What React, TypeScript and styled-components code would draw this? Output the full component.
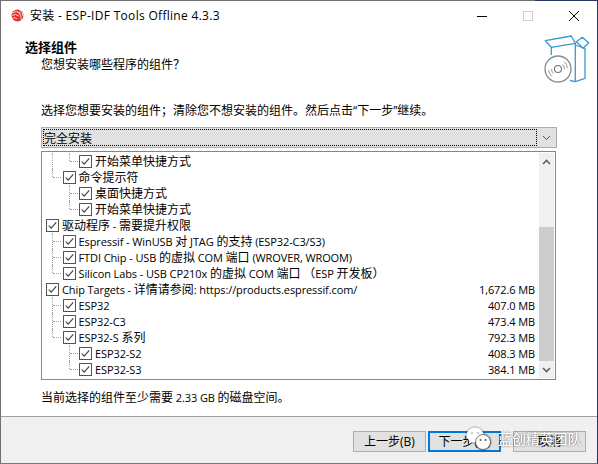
import React, { FC } from 'react'
import styled, { createGlobalStyle } from 'styled-components'

const FONT = `"Open Sans", "Noto Sans CJK SC", sans-serif`

type GuideKind = 'none' | 'pipe' | 'tee' | 'end'

const components: { id: number; guides: GuideKind[]; label: string; size?: string }[] = [
  { id: 1, guides: ['pipe', 'end'], label: '开始菜单快捷方式' },
  { id: 2, guides: ['end'], label: '命令提示符' },
  { id: 3, guides: ['none', 'tee'], label: '桌面快捷方式' },
  { id: 4, guides: ['none', 'end'], label: '开始菜单快捷方式' },
  { id: 5, guides: [], label: '驱动程序 - 需要提升权限' },
  { id: 6, guides: ['tee'], label: 'Espressif - WinUSB 对 JTAG 的支持 (ESP32-C3/S3)' },
  { id: 7, guides: ['tee'], label: 'FTDI Chip - USB 的虚拟 COM 端口 (WROVER, WROOM)' },
  { id: 8, guides: ['end'], label: 'Silicon Labs - USB CP210x 的虚拟 COM 端口 （ESP 开发板）' },
  { id: 9, guides: [], label: 'Chip Targets - 详情请参阅: https://products.espressif.com/', size: '1,672.6 MB' },
  { id: 10, guides: ['tee'], label: 'ESP32', size: '407.0 MB' },
  { id: 11, guides: ['tee'], label: 'ESP32-C3', size: '473.4 MB' },
  { id: 12, guides: ['end'], label: 'ESP32-S 系列', size: '792.3 MB' },
  { id: 13, guides: ['none', 'tee'], label: 'ESP32-S2', size: '408.3 MB' },
  { id: 14, guides: ['none', 'end'], label: 'ESP32-S3', size: '384.1 MB' }
]

const GlobalStyle = createGlobalStyle`
  html, body {
    margin: 0;
    padding: 0;
    background: #fff;
  }
`

const WINDOW = styled.div`
  position: relative;
  box-sizing: border-box;
  width: 598px;
  height: 464px;
  display: flex;
  flex-direction: column;
  background: #fff;
  border-top: 1px solid #707070;
  border-left: 1px solid #707070;
  border-right: 1px solid #24375c;
  border-bottom: 1px solid #7a7a7a;
  font-family: ${FONT};
  font-size: 12px;
  line-height: 16px;
  color: #000;

  &::before {
    content: '';
    position: absolute;
    top: -1px;
    right: -1px;
    width: 63px;
    height: 1px;
    background: #24375c;
  }
`

const TITLE_BAR = styled.div`
  height: 29px;
  flex: none;
  display: flex;
  align-items: center;
  padding-left: 10px;
`

const TITLE_TEXT = styled.span`
  margin-left: 6px;
  flex: 1;
  letter-spacing: 0.3px;
`

const WINDOW_BUTTON = styled.div`
  width: 46px;
  height: 29px;
  display: flex;
  align-items: center;
  justify-content: center;
`

const HEADER = styled.div`
  height: 61px;
  flex: none;
  display: flex;
  align-items: flex-start;
  justify-content: space-between;
`

const HEADER_TEXT = styled.div`
  padding: 9px 0 0 24px;
`

const HEADER_TITLE = styled.div`
  font-size: 13px;
  font-weight: 700;
`

const HEADER_SUB = styled.div`
  margin-top: 2px;
  padding-left: 16px;
`

const BODY = styled.div`
  flex: 1;
  display: flex;
  flex-direction: column;
  padding: 12px 40px 0;
`

const INTRO = styled.div`
  margin-bottom: 8px;
  white-space: nowrap;
`

const COMBO = styled.div`
  box-sizing: border-box;
  height: 21px;
  flex: none;
  display: flex;
  align-items: center;
  padding: 1px;
  background: #e1e1e1;
  border: 1px solid #adadad;
`

const COMBO_VALUE = styled.div`
  flex: 1;
  height: 17px;
  box-sizing: border-box;
  border: 1px dotted #000;
  line-height: 17px;
`

const COMBO_ARROW = styled.div`
  width: 18px;
  display: flex;
  justify-content: center;
`

const LIST = styled.div`
  box-sizing: border-box;
  width: 515px;
  height: 229px;
  margin-top: 3px;
  flex: none;
  display: flex;
  padding: 1px;
  border: 1px solid #828790;
`

const ROWS = styled.div`
  flex: 1;
  padding: 0 4px 0 3px;
`

const ROW = styled.div`
  height: 16px;
  display: flex;
  align-items: center;
  white-space: nowrap;
`

const GUIDE = styled.div<{ $kind: GuideKind }>`
  position: relative;
  width: 16.5px;
  height: 16px;
  flex: none;

  &::before {
    content: '';
    display: ${(props) => (props.$kind === 'none' ? 'none' : 'block')};
    position: absolute;
    left: 6px;
    top: 0;
    height: ${(props) => (props.$kind === 'end' ? '8px' : '16px')};
    border-left: 1px dotted #a0a0a0;
  }

  &::after {
    content: '';
    display: ${(props) => (props.$kind === 'tee' || props.$kind === 'end' ? 'block' : 'none')};
    position: absolute;
    left: 7px;
    top: 8px;
    width: 8px;
    border-top: 1px dotted #a0a0a0;
  }
`

const CHECK = styled.svg`
  width: 13px;
  height: 13px;
  flex: none;
  margin-right: 3px;
`

const LABEL = styled.span`
  flex: 1;
  margin-top: 2px;
`

const SIZE = styled.span`
  flex: none;
  margin-top: 2px;
`

const LATIN = styled.span`
  font-size: 11px;
  letter-spacing: -0.1px;
`

const SCROLLBAR = styled.div`
  width: 15px;
  flex: none;
  display: flex;
  flex-direction: column;
  background: #f0f0f0;
`

const SCROLL_BUTTON = styled.div`
  height: 17px;
  flex: none;
  display: flex;
  align-items: center;
  justify-content: center;
`

const SCROLL_THUMB = styled.div`
  height: 134px;
  margin-top: 57px;
  flex: none;
  background: #cdcdcd;
`

const SCROLL_TRACK = styled.div`
  flex: 1;
`

const NOTE = styled.div`
  margin-top: 10px;
`

const FOOTER = styled.div`
  height: 47px;
  flex: none;
  box-sizing: border-box;
  display: flex;
  justify-content: flex-end;
  gap: 2px;
  padding: 14px 11px 0 0;
  background: #f0f0f0;
  border-top: 1px solid #a0a0a0;
`

const BUTTON = styled.div<{ $primary?: boolean; $spaced?: boolean }>`
  box-sizing: border-box;
  width: 73px;
  height: 21px;
  display: flex;
  align-items: center;
  justify-content: center;
  background: #e1e1e1;
  border: ${(props) => (props.$primary ? '2px solid #0078d7' : '1px solid #adadad')};
  margin-right: ${(props) => (props.$spaced ? '10px' : '0')};
`

const WATERMARK = styled.div`
  position: absolute;
  left: 465px;
  top: 425px;
  display: flex;
  align-items: center;
  filter: drop-shadow(0 0 1px rgba(0, 0, 0, 0.55));
`

const WATERMARK_TEXT = styled.span`
  margin: 0 0 1px 6px;
  font-size: 14px;
  color: #fff;
  letter-spacing: -0.1px;
`

const Mixed: FC<{ text: string }> = ({ text }) => (
  <>
    {text.split(/([\u0020-\u00ff]+)/).map((part, index) => (index % 2 === 1 ? <LATIN key={index}>{part}</LATIN> : part))}
  </>
)

const Logo: FC = () => (
  <svg width="13" height="13" viewBox="0 0 13 13" fill="none">
    <circle cx="6.5" cy="6.5" r="6" fill="#e5322d" />
    <g stroke="#fff" strokeWidth="0.8">
      <path d="M1.5 3.6A7 7 0 0 1 9.6 4.4" />
      <path d="M1 6.4A6 6 0 0 1 7.8 7" />
      <path d="M1.4 9.2A4 4 0 0 1 6 9.8" />
      <path d="M8.6 1A8 8 0 0 1 12 7.2" />
      <path d="M6.6 3A8 8 0 0 1 10 10.8" />
    </g>
  </svg>
)

const BoxIcon: FC = () => (
  <svg width="57" height="60" viewBox="0 0 57 60" fill="none">
    <g stroke="#3a97d4" strokeWidth="1.3" strokeLinejoin="round">
      <path d="M5.3 10.7 31.3 6 35.3 13.3 11.3 17.3Z" />
      <path d="M11.3 17.3V25" />
      <path d="M35.3 13.3V51.7" />
      <path d="M35.3 15 45 18.3V48.3L35.3 51.7 30 50.5" />
      <path d="M36.3 11.7 42.3 7.3 48.7 12.7 43 18.3Z" />
    </g>
    <circle cx="18" cy="39" r="13" fill="#fff" stroke="#8a8a8a" strokeWidth="1.3" />
    <circle cx="18" cy="39" r="3.5" stroke="#777" strokeWidth="1.1" />
    <g stroke="#8c8c8c" strokeWidth="0.9">
      <path d="M22.5 34.5A6.5 6.5 0 0 1 24.5 39" />
      <path d="M24 31.5A10 10 0 0 1 27.5 38" />
      <path d="M13.5 43.5A6.5 6.5 0 0 1 11.5 39" />
      <path d="M12 46.5A10 10 0 0 1 8.5 40" />
    </g>
  </svg>
)

const CheckBox: FC = () => (
  <CHECK viewBox="0 0 13 13" fill="none">
    <rect x="0.5" y="0.5" width="12" height="12" fill="#fff" stroke="#555" />
    <path d="M2.8 6.6 5.2 9.2 10.2 3.4" stroke="#444" strokeWidth="1.2" />
  </CHECK>
)

const Chevron: FC<{ up?: boolean; stroke?: string; width?: number }> = ({ up, stroke = '#606060', width = 1.6 }) => (
  <svg width="9" height="6" viewBox="0 0 9 6" fill="none">
    <path d={up ? 'M1 5 4.5 1.5 8 5' : 'M1 1 4.5 4.5 8 1'} stroke={stroke} strokeWidth={width} />
  </svg>
)

const WeChatIcon: FC = () => (
  <svg width="26" height="26" viewBox="0 0 26 26">
    <ellipse cx="9" cy="9" rx="8.5" ry="7.5" fill="#fff" />
    <path d="M4 13 3 18 8 15Z" fill="#fff" />
    <circle cx="6" cy="7" r="1" fill="#bbb" />
    <circle cx="12" cy="7" r="1" fill="#bbb" />
    <circle cx="17" cy="16" r="7.5" fill="#fff" stroke="#555" strokeWidth="0.8" />
    <circle cx="14.5" cy="14" r="1" fill="#555" />
    <circle cx="19.5" cy="14" r="1" fill="#555" />
  </svg>
)

const App: FC = () => {
  return (
    <>
      <GlobalStyle />
      <WINDOW>
        <TITLE_BAR>
          <Logo />
          <TITLE_TEXT>安装 - ESP-IDF Tools Offline 4.3.3</TITLE_TEXT>
          <WINDOW_BUTTON>
            <svg width="10" height="10" viewBox="0 0 10 10">
              <path d="M0 5.5H10" stroke="#000" />
            </svg>
          </WINDOW_BUTTON>
          <WINDOW_BUTTON>
            <svg width="10" height="10" viewBox="0 0 10 10">
              <rect x="0.5" y="0.5" width="9" height="9" fill="none" stroke="#ccc" />
            </svg>
          </WINDOW_BUTTON>
          <WINDOW_BUTTON>
            <svg width="10" height="10" viewBox="0 0 10 10">
              <path d="M0 0 10 10M10 0 0 10" stroke="#000" />
            </svg>
          </WINDOW_BUTTON>
        </TITLE_BAR>
        <HEADER>
          <HEADER_TEXT>
            <HEADER_TITLE>选择组件</HEADER_TITLE>
            <HEADER_SUB>您想安装哪些程序的组件？</HEADER_SUB>
          </HEADER_TEXT>
          <BoxIcon />
        </HEADER>
        <BODY>
          <INTRO>选择您想要安装的组件；清除您不想安装的组件。然后点击“下一步”继续。</INTRO>
          <COMBO>
            <COMBO_VALUE>完全安装</COMBO_VALUE>
            <COMBO_ARROW>
              <Chevron stroke="#555" width={1} />
            </COMBO_ARROW>
          </COMBO>
          <LIST>
            <ROWS>
              {components.map((item) => {
                return (
                  <ROW key={item.id}>
                    {item.guides.map((kind, index) => (
                      <GUIDE key={index} $kind={kind} />
                    ))}
                    <CheckBox />
                    <LABEL>
                      <Mixed text={item.label} />
                    </LABEL>
                    {item.size && (
                      <SIZE>
                        <Mixed text={item.size} />
                      </SIZE>
                    )}
                  </ROW>
                )
              })}
            </ROWS>
            <SCROLLBAR>
              <SCROLL_BUTTON>
                <Chevron up />
              </SCROLL_BUTTON>
              <SCROLL_THUMB />
              <SCROLL_TRACK />
              <SCROLL_BUTTON>
                <Chevron />
              </SCROLL_BUTTON>
            </SCROLLBAR>
          </LIST>
          <NOTE>
            <Mixed text="当前选择的组件至少需要 2.33 GB 的磁盘空间。" />
          </NOTE>
        </BODY>
        <FOOTER>
          <BUTTON>上一步(B)</BUTTON>
          <BUTTON $primary $spaced>
            下一步(N)
          </BUTTON>
          <BUTTON>取消</BUTTON>
        </FOOTER>
        <WATERMARK>
          <WeChatIcon />
          <WATERMARK_TEXT>蓝创精英团队</WATERMARK_TEXT>
        </WATERMARK>
      </WINDOW>
    </>
  )
}

export default App
